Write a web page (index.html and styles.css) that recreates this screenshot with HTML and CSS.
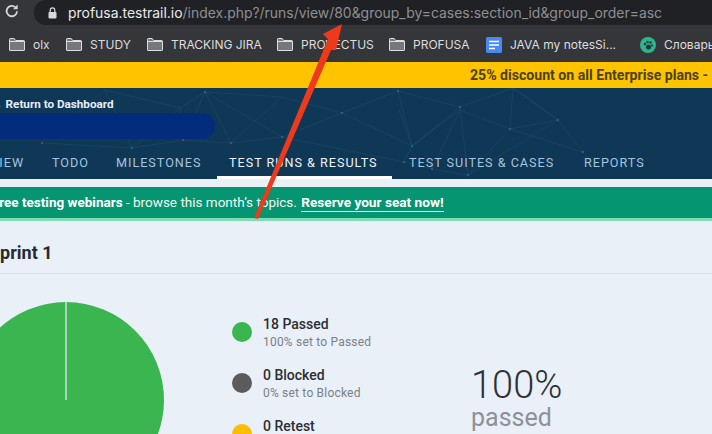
FILE: index.html
```html
<!DOCTYPE html>
<html lang="en">
<head>
<meta charset="utf-8">
<title>Test run</title>
<link rel="stylesheet" href="styles.css">
</head>
<body>
<div class="chrome">
  <div class="toolbar">
    <svg class="reload" width="16" height="16" viewBox="0 0 16 16"><path d="M13 8.200a5.200 5.200 0 1 1-1.600-3.900" fill="none" stroke="#d5d6d8" stroke-width="1.800"/><path d="M13.600 1.600v4.600H9z" fill="#d5d6d8"/></svg>
    <div class="omnibox">
      <svg class="lock" width="9" height="12" viewBox="0 0 9 12"><rect x="0.500" y="5" width="8" height="6.500" rx="1" fill="#d8d9db"/><path d="M2.200 5V3.200a2.300 2.300 0 0 1 4.600 0V5" fill="none" stroke="#d8d9db" stroke-width="1.200"/></svg>
      <span class="host">profusa.testrail.io</span><span class="path">/index.php?/runs/view/80&amp;group_by=cases:section_id&amp;group_order=asc</span>
    </div>
  </div>
  <div class="bookmarks">
    <span class="bm bm-olx"><svg class="folder" viewBox="0 0 16 13"><path d="M.5 12V1.200C.5.800.8.5 1.200.5h4l1.500 2h8.100c.4 0 .7.3.7.7V12c0 .3-.3.5-.6.5H1c-.3 0-.5-.2-.5-.5z" fill="#77787b" stroke="#dcdddf"/><path d="M.5 3.500h15" stroke="#dcdddf"/></svg>olx</span>
    <span class="bm bm-study"><svg class="folder" viewBox="0 0 16 13"><path d="M.5 12V1.200C.5.800.8.5 1.200.5h4l1.500 2h8.100c.4 0 .7.3.7.7V12c0 .3-.3.5-.6.5H1c-.3 0-.5-.2-.5-.5z" fill="#77787b" stroke="#dcdddf"/><path d="M.5 3.500h15" stroke="#dcdddf"/></svg>STUDY</span>
    <span class="bm bm-jira"><svg class="folder" viewBox="0 0 16 13"><path d="M.5 12V1.200C.5.800.8.5 1.200.5h4l1.500 2h8.100c.4 0 .7.3.7.7V12c0 .3-.3.5-.6.5H1c-.3 0-.5-.2-.5-.5z" fill="#77787b" stroke="#dcdddf"/><path d="M.5 3.500h15" stroke="#dcdddf"/></svg>TRACKING JIRA</span>
    <span class="bm bm-pro"><svg class="folder" viewBox="0 0 16 13"><path d="M.5 12V1.200C.5.800.8.5 1.200.5h4l1.500 2h8.100c.4 0 .7.3.7.7V12c0 .3-.3.5-.6.5H1c-.3 0-.5-.2-.5-.5z" fill="#77787b" stroke="#dcdddf"/><path d="M.5 3.500h15" stroke="#dcdddf"/></svg>PROVECTUS</span>
    <span class="bm bm-profusa"><svg class="folder" viewBox="0 0 16 13"><path d="M.5 12V1.200C.5.800.8.5 1.200.5h4l1.500 2h8.100c.4 0 .7.3.7.7V12c0 .3-.3.5-.6.5H1c-.3 0-.5-.2-.5-.5z" fill="#77787b" stroke="#dcdddf"/><path d="M.5 3.500h15" stroke="#dcdddf"/></svg>PROFUSA</span>
    <span class="bm bm-java"><svg class="docs" viewBox="0 0 16 16"><rect width="16" height="16" rx="1.500" fill="#4a89f0"/><path d="M3 4.500h10M3 8h10M3 11.500h6" stroke="#fff" stroke-width="1.600"/></svg>JAVA my notesSi...</span>
    <span class="bm bm-dict"><svg class="docs" viewBox="0 0 16 16"><circle cx="8" cy="8" r="8" fill="#2fb58a"/><circle cx="8.500" cy="10" r="2.500" fill="#234"/><circle cx="5" cy="7" r="1.200" fill="#234"/><circle cx="7.500" cy="5" r="1.200" fill="#234"/><circle cx="10.500" cy="5.500" r="1.200" fill="#234"/><circle cx="12" cy="8.500" r="1.100" fill="#234"/></svg>Словарь</span>
  </div>
</div>

<div class="promo">25% discount on all Enterprise plans - <span class="promo-link">Get it now</span></div>

<header class="hero">
  <svg class="mesh" width="712" height="91" viewBox="0 88 712 91">
    <g stroke="#2f5876" stroke-width=".6" fill="none" opacity=".55">
      <path d="M42 143L105 90L132 148L183 140L205 92L231 143L282 137L342 113L282 97L231 143M105 90L180 108L205 92L282 97M132 148L180 108L183 140M282 137L205 92M42 143L132 148M183 140L231 143"/>
      <path d="M342 113L398 91L412 146L460 110L510 129L558 120L583 152M398 91L460 107L513 88L510 129M460 107L412 146L404 162L432 169L468 175L510 129M460 110L432 169M399 110L412 146M342 113L412 146M282 137L404 162M558 120L468 175M510 129L583 152M513 88L558 120M460 107L468 175M558 120L513 88"/>
    </g>
    <g fill="#3c6482" opacity=".8">
      <circle cx="42" cy="143" r="1.200"/><circle cx="132" cy="148" r="1.200"/><circle cx="183" cy="140" r="1.200"/><circle cx="231" cy="143" r="1.200"/><circle cx="282" cy="137" r="1.200"/><circle cx="342" cy="113" r="1.200"/><circle cx="205" cy="92" r="1.200"/><circle cx="398" cy="91" r="1.200"/><circle cx="412" cy="146" r="1.200"/><circle cx="460" cy="107" r="1.200"/><circle cx="510" cy="129" r="1.200"/><circle cx="558" cy="120" r="1.200"/><circle cx="583" cy="152" r="1.200"/><circle cx="404" cy="162" r="1.200"/><circle cx="432" cy="169" r="1.200"/><circle cx="468" cy="175" r="1.200"/>
    </g>
  </svg>
  <div class="back">← Return to Dashboard</div>
  <div class="redaction"></div>
  <nav class="tabs">
    <span class="tab tab-overview">OVERVIEW</span>
    <span class="tab tab-todo">TODO</span>
    <span class="tab tab-miles">MILESTONES</span>
    <span class="tab tab-active">TEST RUNS &amp; RESULTS</span>
    <span class="tab tab-suites">TEST SUITES &amp; CASES</span>
    <span class="tab">REPORTS</span>
  </nav>
</header>

<div class="notice">Free testing webinars<span class="notice-rest"> - browse this month’s topics. </span><a class="notice-link">Reserve your seat now!</a></div>

<main class="content">
  <h1 class="title">Sprint 1</h1>
  <section class="summary">
    <div class="pie"><div class="pie-line"></div></div>
    <ul class="legend">
      <li class="item"><span class="dot dot-pass"></span><div class="item-text"><div class="count">18 Passed</div><div class="sub">100% set to Passed</div></div></li>
      <li class="item"><span class="dot dot-block"></span><div class="item-text"><div class="count">0 Blocked</div><div class="sub">0% set to Blocked</div></div></li>
      <li class="item"><span class="dot dot-retest"></span><div class="item-text"><div class="count">0 Retest</div><div class="sub">0% set to Retest</div></div></li>
    </ul>
    <div class="total"><div class="pct">100%</div><div class="pct-label">passed</div></div>
  </section>
</main>

<svg class="arrow" width="712" height="434" viewBox="0 0 712 434"><path d="M254 218L258 219L331 50L336 50L342 24L323 34L328 39Z" fill="#ee3a1c"/></svg>
</body>
</html>
```
FILE: styles.css
```css
* { box-sizing: border-box; }
html, body { margin: 0; padding: 0; }
body {
  width: 712px;
  height: 434px;
  overflow: hidden;
  position: relative;
  background: #e9f0f7;
  font-family: Roboto, "Liberation Sans", sans-serif;
}
.chrome { background: #35363a; height: 62px; font-family: Inter, "Liberation Sans", sans-serif; }
.toolbar { height: 25px; display: flex; align-items: flex-start; padding-left: 4px; }
.reload { margin-top: 3px; flex: none; }
.omnibox {
  margin-left: 14px;
  flex: 1;
  height: 25px;
  background: #202124;
  border-radius: 12px 0 0 12px;
  display: flex;
  align-items: center;
  padding-left: 14px;
  font-size: 13.950px;
  white-space: nowrap;
  overflow: hidden;
}
.lock { margin-right: 11px; flex: none; }
.host { color: #e8e9eb; }
.path { color: #8d8f93; }
.bookmarks {
  height: 37px;
  display: flex;
  align-items: center;
  font-size: 12px;
  color: #dcdddf;
  white-space: nowrap;
  padding: 2px 0 0 9px;
}
.bm { display: flex; align-items: center; gap: 8px; flex: none; }
.bm-olx { width: 57px; }
.bm-study { width: 81px; }
.bm-jira { width: 130px; }
.bm-pro { width: 112px; }
.bm-profusa { width: 97px; }
.bm-java { width: 154px; }
.folder { width: 16px; height: 13px; flex: none; }
.docs { width: 16px; height: 16px; flex: none; }
.promo {
  height: 26px;
  background: #ffc300;
  color: #4a4218;
  font-weight: 700;
  font-size: 14.100px;
  line-height: 27px;
  padding-left: 470px;
  white-space: nowrap;
  overflow: hidden;
}
.promo-link { color: #7a8c6a; }
.hero {
  height: 91px;
  background: #0f3756;
  position: relative;
  overflow: hidden;
  display: flex;
  flex-direction: column;
}
.mesh { position: absolute; left: 0; top: 0; }
.back {
  position: relative;
  color: #e6eef6;
  font-size: 11.700px;
  font-weight: 700;
  line-height: 14px;
  margin: 9px 0 0 -9px;
  white-space: nowrap;
}
.redaction {
  position: relative;
  width: 215px;
  height: 26px;
  margin-top: 2px;
  background: #032c7c;
  border-radius: 0 13px 13px 0 / 0 12px 14px 0;
}
.tabs {
  position: relative;
  display: flex;
  margin: 12px 0 0 -45px;
  font-size: 12.600px;
  letter-spacing: 1px;
  color: #a6c4dd;
  white-space: nowrap;
  height: 28px;
}
.tab { padding-top: 4px; margin-right: 30px; flex: none; }
.tab-overview { width: 67px; }
.tab-todo { width: 34px; }
.tab-miles { width: 83px; }
.tab-active {
  color: #eef4f9;
  width: 175px;
  margin: 0 17px 0 -12px;
  padding-left: 12px;
  background: linear-gradient(#fff, #fff) bottom / 100% 3px no-repeat;
}
.tab-suites { width: 145px; }
.notice {
  margin-top: 8px;
  height: 34px;
  background: #059571;
  border-bottom: 3px solid #7edcb4;
  color: #fff;
  font-size: 13.500px;
  font-weight: 700;
  line-height: 30px;
  margin-left: -8px;
  white-space: nowrap;
}
.notice-rest { font-weight: 400; color: #eef8f4; }
.notice-link { color: #fff; border-bottom: 1px solid #fff; padding-bottom: 1px; margin-left: 1px; font-size: 13.650px; }
.title {
  margin: 0 0 0 -11px;
  height: 53px;
  padding-top: 21px;
  font-size: 18px;
  line-height: 22px;
  font-weight: 700;
  color: #262b30;
  border-bottom: 1px solid #d7e0ea;
  width: 730px;
}
.summary { display: flex; align-items: flex-start; padding-top: 28px; }
.pie {
  flex: none;
  width: 196px;
  height: 196px;
  margin-left: -32px;
  border-radius: 50%;
  background: #3ab54f;
  position: relative;
}
.pie-line {
  position: absolute;
  left: 97px;
  top: 0;
  width: 2px;
  height: 98px;
  background: #a9d6b9;
}
.legend {
  list-style: none;
  margin: 4px 0 0 68px;
  padding: 0;
  width: 240px;
  flex: none;
}
.item { display: flex; align-items: center; gap: 11px; height: 51px; }
.item-text { padding-top: 2px; }
.dot { width: 20px; height: 20px; border-radius: 50%; flex: none; }
.dot-pass { background: #3ab54f; }
.dot-block { background: #5b5b5e; }
.dot-retest { background: #ffbd00; }
.count { font-size: 14px; font-weight: 500; line-height: 18px; color: #2b2e33; }
.sub { font-size: 12px; line-height: 18px; color: #7b7f86; letter-spacing: .2px; }
.total { margin: 63px 0 0 -1px; }
.pct { font-size: 38px; line-height: 40px; font-weight: 300; color: #2e3135; }
.pct-label { font-size: 25px; line-height: 25px; color: #8e9197; }
.arrow { position: absolute; left: 0; top: 0; pointer-events: none; }
```
